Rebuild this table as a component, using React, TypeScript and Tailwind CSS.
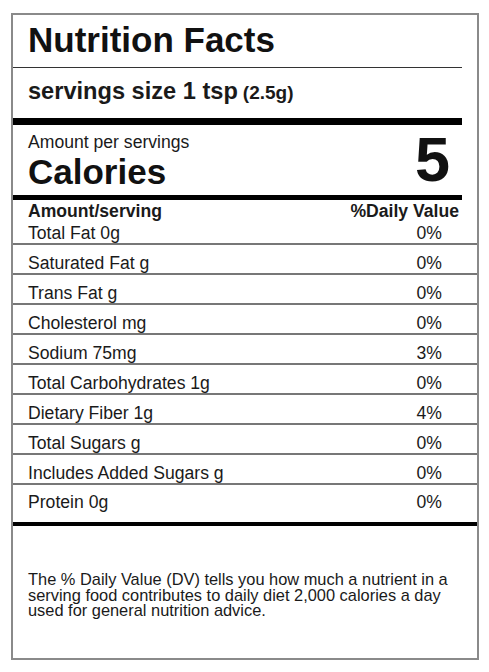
const nutrients = [
  { label: 'Saturated Fat g', dv: '0%' },
  { label: 'Trans Fat g', dv: '0%' },
  { label: 'Cholesterol mg', dv: '0%' },
  { label: 'Sodium 75mg', dv: '3%' },
  { label: 'Total Carbohydrates 1g', dv: '0%' },
  { label: 'Dietary Fiber 1g', dv: '4%' },
  { label: 'Total Sugars g', dv: '0%' },
  { label: 'Includes Added Sugars g', dv: '0%' },
];

export default function App() {
  return (
    <div className="min-h-screen bg-white pt-[13px] pl-[11px] font-['Liberation_Sans',Arial,sans-serif] text-[#1a1a1a]">
      <div className="w-[468px] h-[647px] border-2 border-[#8a8a8a] flex flex-col">
        {/* Header */}
        <div className="mr-[15px]">
          <h1 className="pl-[15px] pt-[5px] pb-[7px] text-[35px] leading-[40px] font-bold text-[#111] border-b border-[#333]">
            Nutrition Facts
          </h1>
          <div className="pl-[15px] pt-[9px] pb-[13px] flex items-baseline border-b-[7px] border-black font-bold">
            <span className="text-[23.6px] leading-[28px]">servings size 1 tsp</span>
            <span className="text-[19px] leading-[20px] ml-[5px]">(2.5g)</span>
          </div>
          <div className="pl-[15px] pr-[12px] pt-[3px] pb-[3px] flex items-end justify-between border-b-[5px] border-black">
            <div>
              <p className="text-[17.6px] leading-[20px]">Amount per servings</p>
              <p className="text-[35px] leading-[40px] font-bold text-[#111]">Calories</p>
            </div>
            <span className="text-[63px] leading-none font-bold text-[#111] mb-[1px]">5</span>
          </div>
        </div>

        {/* Table */}
        <div className="text-[17.6px] leading-[20px]">
          <div className="pl-[15px] pr-[18px] pt-[1px] flex justify-between font-bold">
            <span>Amount/serving</span>
            <span>%Daily Value</span>
          </div>
          <div className="pl-[15px] pr-[35px] mt-[2px] flex justify-between border-b-2 border-[#777]">
            <span>Total Fat 0g</span>
            <span>0%</span>
          </div>
          {nutrients.map((n) => (
            <div
              key={n.label}
              className="pl-[15px] pr-[35px] pt-[8px] flex justify-between border-b-2 border-[#777]"
            >
              <span>{n.label}</span>
              <span>{n.dv}</span>
            </div>
          ))}
          <div className="pl-[15px] pr-[35px] pt-[7px] pb-[10px] flex justify-between border-b-4 border-black">
            <span>Protein 0g</span>
            <span>0%</span>
          </div>
        </div>

        {/* Footer */}
        <div className="flex-1 pl-[15px] pr-[15px] pt-[46px]">
          <p className="text-[16.4px] leading-[15.5px]">
            The % Daily Value (DV) tells you how much a nutrient in a serving food contributes to daily diet 2,000
            calories a day used for general nutrition advice.
          </p>
        </div>
      </div>
    </div>
  );
}
